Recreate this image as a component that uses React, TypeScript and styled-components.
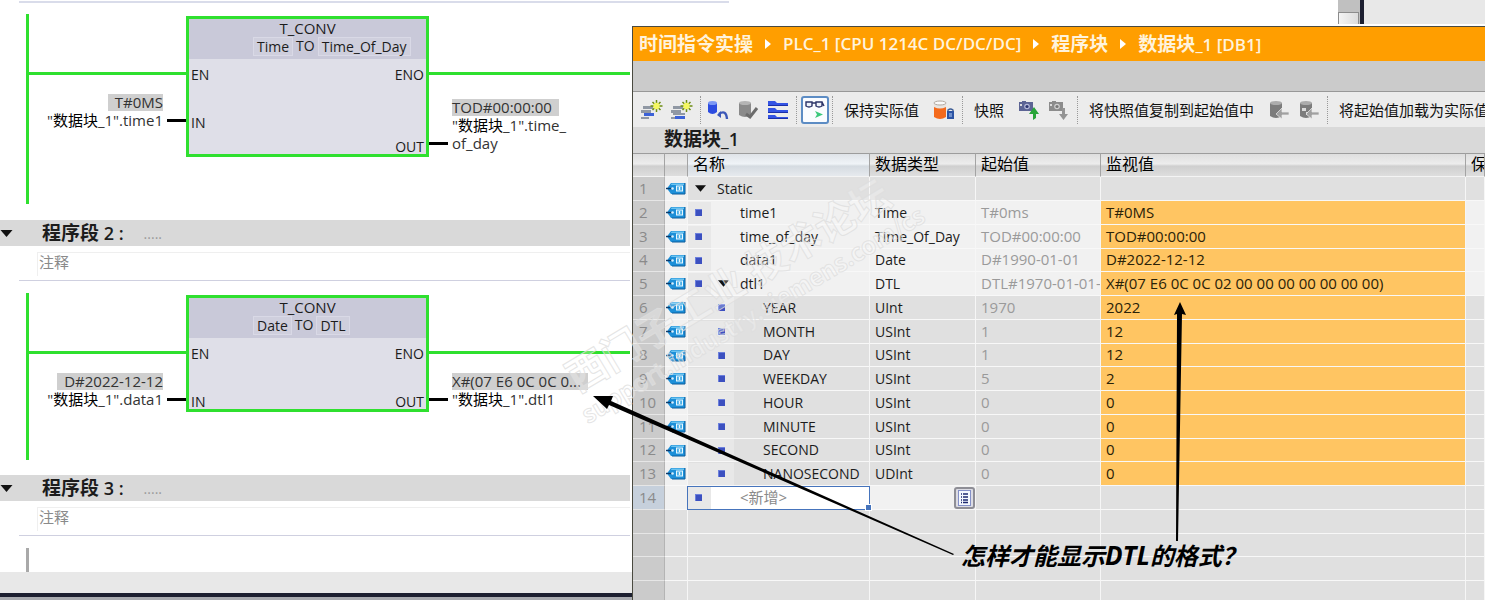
import React from 'react';
import styled, { createGlobalStyle } from 'styled-components';

const GREEN = '#2fe02f';

const GlobalStyle = createGlobalStyle`
  * { box-sizing: border-box; }
  body {
    margin: 0;
    background: #fff;
    color: #1c1c1c;
    font-family: "Open Sans", "Noto Sans CJK SC", sans-serif;
    font-size: 14px;
  }
  button, input { font: inherit; color: inherit; }
  button { border: 0; background: none; padding: 0; cursor: pointer; }
`;

const Screen = styled.main`
  position: relative;
  display: grid;
  grid-template-columns: 632px minmax(0, 1fr);
  grid-template-rows: minmax(0, 1fr);
  height: 100vh;
  overflow: hidden;
`;

/* ---------- ladder editor ---------- */

const Editor = styled.section`
  display: flex;
  flex-direction: column;
  min-width: 0;
  background: #fff;
`;

const Rule = styled.div`
  flex: none;
  height: 2px;
  margin: 1px 0 0 19px;
  background: #d9dcea;
`;

const ThinRule = styled.div`
  flex: none;
  height: 1px;
  margin: 4px 2px 1px 19px;
  background: #cfd0e0;
`;

const Rung = styled.div<{ $height: number; $after: number }>`
  display: flex;
  flex: none;
  align-items: flex-start;
  height: ${(p) => p.$height}px;
  margin: 11px 2px ${(p) => p.$after}px 26px;
`;

const Rail = styled.div<{ $idle?: boolean }>`
  flex: none;
  width: 3px;
  height: 100%;
  background: ${(p) => (p.$idle ? '#a9a9a9' : GREEN)};
`;

const Side = styled.div<{ $grow?: boolean }>`
  display: flex;
  flex-direction: column;
  flex: ${(p) => (p.$grow ? '1 1 0' : '0 0 157px')};
  min-width: 0;
`;

const Wire = styled.div`
  height: 3px;
  margin-top: 58px;
  background: ${GREEN};
`;

const Operand = styled.div<{ $top: number; $output?: boolean }>`
  display: flex;
  flex-direction: ${(p) => (p.$output ? 'row-reverse' : 'row')};
  justify-content: flex-end;
  align-items: flex-end;
  gap: 4px;
  margin-top: ${(p) => p.$top}px;
`;

const OperandText = styled.div<{ $output?: boolean }>`
  display: flex;
  flex-direction: column;
  align-items: ${(p) => (p.$output ? 'flex-start' : 'flex-end')};
  font-size: 15px;
  line-height: 18px;
  white-space: nowrap;
  color: #333;
`;

const LiveValue = styled.span`
  padding: 0 0 0 7px;
  background: #cfcfcf;
  line-height: 17px;
`;

const OutValue = styled(LiveValue)`
  padding: 0 7px 0 0;
`;

const Cjk = styled.span`
  color: #000;
`;

const Pin = styled.div`
  flex: none;
  width: 19px;
  height: 3px;
  margin-bottom: 7px;
  background: #000;
`;

const Block = styled.div<{ $height: number }>`
  flex: 0 0 243px;
  height: ${(p) => p.$height}px;
  margin-top: 2px;
  border: 3px solid ${GREEN};
  background: #dfdfe8;
  overflow: hidden;
`;

const BlockHead = styled.div`
  height: 40px;
  background: #c9c9d9;
  font-size: 15px;
  text-align: center;
  line-height: 18px;
`;

const Conversion = styled.div`
  display: flex;
  gap: 3px;
  padding-left: 64px;
  font-size: 14px;
`;

const TypePick = styled.button`
  height: 19px;
  padding: 0 3px;
  border: 1px solid #d9d9e6;
  background: #cfcfdd;
  line-height: 16px;
`;

const Ports = styled.div`
  display: grid;
  grid-auto-rows: 24px;
  padding-top: 4px;
`;

const PortRow = styled.div`
  display: flex;
  justify-content: space-between;
  padding: 0 2px;
  line-height: 24px;
`;

const NetHead = styled.header`
  display: flex;
  flex: none;
  align-items: center;
  height: 26px;
  margin-right: 2px;
  background: #d9d9d9;
`;

const Fold = styled.button`
  display: flex;
  width: 42px;
`;

const NetTitle = styled.h2`
  margin: 0;
  font-size: 18px;
  font-weight: 600;
  line-height: 24px;
  white-space: pre;
`;

const BigCjk = styled.span`
  font-size: 19px;
  font-weight: 700;
`;

const Dots = styled.span`
  margin-left: 20px;
  color: #9a9a9a;
`;

const Comment = styled.input`
  flex: none;
  height: 24px;
  margin: 6px 2px 0 37px;
  padding: 0 0 6px 1px;
  border: 1px solid #efefef;
  border-width: 1px 0 0 1px;
  border-radius: 0;
  background: #fff;
  color: #8a8a8a;
  font-size: 15px;
  outline: 0;
`;

const EditorFoot = styled.div`
  flex: 1 0 auto;
  background: #e8e8e8;
`;

const PaneEdge = styled.div`
  flex: none;
  height: 7px;
  border-top: 4px solid #1c1f30;
  background: #a9abb0;
`;

/* ---------- data block window ---------- */

const RightSide = styled.div`
  display: flex;
  flex-direction: column;
  min-width: 0;
  min-height: 0;
`;

const Behind = styled.div`
  display: flex;
  flex: none;
  height: 24px;
  margin-bottom: 2px;
`;

const BehindPage = styled.div`
  flex: 1;
`;

const BehindRule = styled.div`
  width: 97px;
  height: 2px;
  margin-top: 1px;
  background: #d9dcea;
`;

const ScrollTrack = styled.div`
  display: flex;
  align-items: flex-end;
  width: 22px;
  background: #c0c0c0;
`;

const ScrollThumb = styled.div`
  width: 21px;
  height: 12px;
  border: 1px solid #8c8c8c;
  border-bottom: 0;
  background: linear-gradient(90deg, #f4f4f4, #dcdcdc);
`;

const BehindPanel = styled.div`
  width: 125px;
  border-left: 4px solid #1c1f30;
  background: #e8e8e8;
`;

const DbWindow = styled.section`
  display: flex;
  flex: 1;
  flex-direction: column;
  min-height: 0;
  border: solid #4a4a40;
  border-width: 1px 0 0 1px;
  background: #e0e0e0;
  overflow: hidden;
`;

const Crumbs = styled.nav`
  display: flex;
  flex: none;
  align-items: center;
  height: 34px;
  padding-left: 6px;
  background: #ff9e00;
  color: #fff3dc;
  font-size: 17px;
  font-weight: 600;
  white-space: nowrap;
`;

const Crumb = styled.a`
  color: inherit;
  text-decoration: none;
  line-height: 30px;
`;

const CrumbArrow = styled.svg`
  flex: none;
  width: 6px;
  height: 10px;
  margin: 0 12px;
`;

const Spacer = styled.div`
  flex: none;
  height: 31px;
  border-bottom: 1px solid #989898;
  background: #cbcbcb;
`;

const Toolbar = styled.div`
  display: flex;
  flex: none;
  align-items: center;
  height: 35px;
  padding-left: 4px;
  background: #ececec;
  overflow: hidden;
`;

const ToolButton = styled.button`
  display: flex;
  flex: none;
  align-items: center;
  justify-content: center;
  width: 30px;
  height: 28px;
`;

const ToolToggle = styled(ToolButton)`
  width: 28px;
  margin-left: 2px;
  border: 2px solid #5c8cc4;
  border-radius: 3px;
  background: #fafcff;
`;

const TextButton = styled.button`
  flex: none;
  padding: 0 10px 0 9px;
  font-size: 15px;
  white-space: nowrap;
  color: #111;
`;

const Separator = styled.div`
  flex: none;
  width: 1px;
  height: 28px;
  margin: 0 2px 0 3px;
  border-left: 1px dotted #999;
`;

const DbTitle = styled.h1`
  flex: none;
  height: 26px;
  margin: 0;
  padding-left: 31px;
  background: #d9d9d9;
  font-size: 18px;
  font-weight: 600;
  line-height: 24px;
`;

const Grid = styled.table`
  width: 100%;
  table-layout: fixed;
  border-collapse: separate;
  border-spacing: 0;

  th {
    height: 24px;
    padding: 0 0 2px 5px;
    border-top: 1px solid #9c9c9c;
    border-right: 1px solid #a4a4a4;
    border-bottom: 1px solid #f4f4f4;
    background: linear-gradient(#dedede, #ededed 45%, #cfcfcf 55%, #dedede);
    font-size: 16px;
    font-weight: 400;
    line-height: 20px;
    text-align: left;
    white-space: nowrap;
    overflow: hidden;
    color: #000;
  }
  th.name { background: linear-gradient(#dfe3e8, #f0f4f8 45%, #d5dbe1 55%, #e6eaee); }

  tbody tr { height: 24px; }
  tbody tr:nth-child(4n) { height: 23px; }
`;

const Cell = styled.td<{ $bg: string }>`
  height: inherit;
  padding: 0 0 0 5px;
  border-right: 1px solid #f6f6f6;
  border-bottom: 1px solid #f8f8f8;
  background: ${(p) => p.$bg};
  line-height: 20px;
  white-space: nowrap;
  overflow: hidden;
`;

const NumCell = styled(Cell)`
  padding: 0 0 2px 6px;
  border-right-color: #b4b4b4;
  border-bottom-color: #e6e6e6;
  color: #8a8a8a;
  font-size: 15px;
`;

const TagCell = styled(Cell)`
  padding: 0 0 0 1px;
  svg { display: block; }
`;

const ValueCell = styled(Cell)<{ $muted?: boolean }>`
  padding-bottom: 2px;
  color: ${(p) => (p.$muted ? '#9a9a9a' : '#2a2208')};
  font-size: 15px;
`;

const NameCell = styled(Cell)`
  position: relative;
  padding: 0;
  overflow: visible;
`;

const NameLine = styled.div<{ $active?: boolean }>`
  display: flex;
  height: 22px;
  align-items: center;
  ${(p) => p.$active && 'box-shadow: 0 0 0 1px #4674bc;'}
`;

const Slot = styled.span<{ $guide?: boolean }>`
  display: flex;
  flex: none;
  align-self: stretch;
  align-items: center;
  width: 23px;
  padding-left: 7px;
  background: ${(p) => (p.$guide ? '#e8e8e8' : 'transparent')};
`;

const Bullet = styled.i`
  width: 7px;
  height: 7px;
  background: #3c50c0;
  border: solid #6c80dc;
  border-width: 1px 0 0 1px;
`;

const NameText = styled.span`
  padding-left: 6px;
`;

const NewName = styled.input`
  width: 120px;
  height: 20px;
  padding: 0 0 1px 6px;
  border: 0;
  outline: 0;
  background: transparent;
  color: #8a8a8a;
  font-size: 15px;
`;

const Handle = styled.i`
  position: absolute;
  right: -3px;
  bottom: -2px;
  z-index: 1;
  width: 7px;
  height: 7px;
  border: 1px solid #fff;
  background: #4674bc;
`;

const TypeLine = styled.div`
  display: flex;
  justify-content: flex-end;
`;

const ListButton = styled.button`
  display: flex;
  align-items: center;
  justify-content: center;
  width: 21px;
  height: 22px;
  border: 2px solid #8e8e96;
  border-radius: 3px;
  background: #dcdce4;
`;

/* ---------- annotations drawn over the screen ---------- */

const Annotation = styled.svg`
  position: absolute;
  inset: 0;
  width: 1485px;
  height: 600px;
  pointer-events: none;
`;

const Watermark = styled.text`
  fill: rgba(255, 255, 255, 0.25);
  stroke: rgba(222, 222, 222, 0.8);
  stroke-width: 1;
  font-family: "Noto Sans CJK SC", sans-serif;
  font-weight: 700;
`;

const Question = styled.p`
  position: absolute;
  left: 961px;
  top: 540px;
  margin: 0;
  color: #000;
  font-size: 24px;
  font-weight: 700;
  font-style: italic;
  line-height: 30px;
  white-space: nowrap;
`;

const Acronym = styled.span`
  font-size: 26px;
`;

/* ---------- icons ---------- */

const Triangle = ({ w = 12 }: { w?: number }) => (
  <svg width={w} height={7} viewBox="0 0 12 7" aria-hidden>
    <path d="M0 0H12L6 7Z" fill="#111" />
  </svg>
);

const TagIcon = () => (
  <svg width="20" height="13" viewBox="0 0 20 13" aria-hidden>
    <path d="M5 1H19V12H5L1 6.5Z" fill="#1c8fd8" />
    <path d="M5.5 1.5H18V3H5Z" fill="#6cc4f0" />
    <path d="M19 1V12H6" fill="none" stroke="#0c5c9c" />
    <path d="M0 6.5H6" stroke="#0c3c6c" strokeWidth="1.4" />
    <circle cx="6.5" cy="6.5" r="1.3" fill="#d8f0ff" />
    <rect x="10.5" y="4" width="6" height="5" fill="#4cb0e8" stroke="#e8f8ff" />
    <path d="M13.500 5V8" stroke="#e8f8ff" strokeWidth="1.3" />
  </svg>
);

const RowsIcon = ({ low }: { low?: boolean }) => (
  <svg width="22" height="22" viewBox="0 0 22 22" aria-hidden>
    <g fill="#9098a4">
      <rect x="2" y="7" width="10" height="3" />
      <rect x="0" y="11" width="10" height="3" />
      {low && <rect x="2" y="14" width="12" height="2" />}
      <rect x="0" y="18" width="8" height="2" />
    </g>
    <rect x={low ? 4 : 3} y={low ? 17 : 14} width="10" height="3" fill="#3c62d8" />
    <path
      d="M15.500 1V13M9.500 7H21.500M11.500 3L19.500 11M19.500 3L11.500 11"
      stroke="#6c8c10"
      strokeWidth="1.5"
    />
    <circle cx="15.500" cy="7" r="3.200" fill="#f4f860" />
  </svg>
);

const Cylinder = ({ x, y, w, h, body, top }: { x: number; y: number; w: number; h: number; body: string; top: string }) => (
  <>
    <path
      d={`M${x} ${y + 2}V${y + h - 2}Q${x + w / 2} ${y + h + 2} ${x + w} ${y + h - 2}V${y + 2}Z`}
      fill={body}
    />
    <ellipse cx={x + w / 2} cy={y + 2} rx={w / 2} ry="2" fill={top} />
  </>
);

const DbUndoIcon = () => (
  <svg width="22" height="22" viewBox="0 0 22 22" aria-hidden>
    <Cylinder x={1} y={2} w={9} h={13} body="#2c4ce0" top="#7c98f4" />
    <path d="M12 15Q19 10 20 20" fill="none" stroke="#3c58b8" strokeWidth="2.4" />
    <path d="M10 16L14 12V19Z" fill="#3c58b8" />
  </svg>
);

const DbCheckIcon = () => (
  <svg width="22" height="22" viewBox="0 0 22 22" aria-hidden>
    <Cylinder x={2} y={2} w={12} h={16} body="#8a8a8a" top="#b4b4b4" />
    <path d="M9 15L13 18L20 9" fill="none" stroke="#6c6c6c" strokeWidth="3" />
  </svg>
);

const FoldersIcon = () => (
  <svg width="22" height="22" viewBox="0 0 22 22" aria-hidden>
    <g fill="#3454e4">
      <path d="M1 2H8L10 4H21V7H1Z" />
      <path d="M1 9H8L10 11H21V14H1Z" />
      <path d="M1 16H8L10 18H21V20H1Z" />
    </g>
    <path d="M1 6.500H21M1 13.500H21M1 19.500H21" stroke="#1c30a8" />
  </svg>
);

const GlassesIcon = () => (
  <svg width="24" height="24" viewBox="0 0 24 24" aria-hidden>
    <path
      d="M3 4H9V8Q6 10 3 8ZM13 4H19V8Q16 10 13 8ZM9 5H13M19 4L21 8"
      fill="#eef2fa"
      stroke="#2c3468"
      strokeWidth="1.4"
    />
    <path d="M12 13L20 16.500L12 20L14 16.500Z" fill="#3cc87c" />
  </svg>
);

const RetainIcon = () => (
  <svg width="22" height="22" viewBox="0 0 22 22" aria-hidden>
    <Cylinder x={1} y={2} w={12} h={18} body="#f46a1c" top="#fff" />
    <path d="M1 4V8Q7 11 13 8V4Q7 7 1 4Z" fill="#e8e4e0" />
    <ellipse cx="7" cy="4" rx="6" ry="2" fill="#fafafa" stroke="#b0a8a0" />
    <path d="M15 13V11Q17.500 9 20 11V13" fill="none" stroke="#3c5c94" strokeWidth="1.4" />
    <rect x="14" y="12" width="7" height="8" fill="#2c54a4" />
    <path d="M16 15H19M16 17H19" stroke="#b4ccf4" />
  </svg>
);

const CameraIcon = ({ off }: { off?: boolean }) => (
  <svg width="22" height="22" viewBox="0 0 22 22" aria-hidden>
    <path d="M1 3H4V2H8V3H15V12H1Z" fill={off ? '#8c8c8c' : '#5c6494'} />
    <circle cx="9" cy="7.500" r="2.800" fill={off ? '#d0d0d0' : '#b4b8d8'} />
    <circle cx="9" cy="7.500" r="1.600" fill={off ? '#777' : '#2c3470'} />
    <rect x="2" y="5" width="2" height="2" fill="#ddd" />
    {off ? (
      <path d="M14 9H17V15H20L15.500 21L11 15H14Z" fill="#949494" />
    ) : (
      <path d="M15 21V15H11L16 8L21 15H18V19Z" fill="#28a438" />
    )}
  </svg>
);

const DbArrowIcon = ({ dotted }: { dotted?: boolean }) => (
  <svg width="22" height="22" viewBox="0 0 22 22" aria-hidden>
    <Cylinder x={2} y={2} w={12} h={17} body="#7c7c7c" top="#acacac" />
    {dotted && <path d="M4 9H8V12H4ZM8 13H11V16H8Z" fill="#dcdcdc" />}
    <path d="M8 15L14 9V13H21V16H14V20Z" fill="#a0a0a0" stroke="#ececec" strokeWidth=".7" />
  </svg>
);

const ListIcon = () => (
  <svg width="15" height="16" viewBox="0 0 15 16" aria-hidden>
    <rect x="1.500" y=".500" width="12" height="15" fill="#f4f8ff" stroke="#8490c8" />
    <path d="M4 4H5M4 7H5M4 10H5M4 12.500H5M6 4H11M6 7H11M6 10H11M6 12.500H11" stroke="#1c2870" strokeWidth="1.5" />
  </svg>
);

/* ---------- ladder parts ---------- */

type NetworkProps = {
  height: number;
  after: number;
  blockHeight: number;
  from: string;
  to: string;
  ports: [string, string][];
  input: { value: string; member: string };
  output: { value: string; member: string; rest?: string; top: number };
};

const Network = ({ height, after, blockHeight, from, to, ports, input, output }: NetworkProps) => (
  <Rung $height={height} $after={after}>
    <Rail />
    <Side>
      <Wire />
      <Operand $top={19}>
        <OperandText>
          <LiveValue>{input.value}</LiveValue>
          <span>"<Cjk>数据块</Cjk>_1".{input.member}</span>
        </OperandText>
        <Pin />
      </Operand>
    </Side>
    <Block $height={blockHeight}>
      <BlockHead>
        T_CONV
        <Conversion>
          <TypePick>{from}</TypePick>
          <span>TO</span>
          <TypePick>{to}</TypePick>
        </Conversion>
      </BlockHead>
      <Ports>
        {ports.map(([left, right], i) => (
          <PortRow key={i}>
            <span>{left}</span>
            <span>{right}</span>
          </PortRow>
        ))}
      </Ports>
    </Block>
    <Side $grow>
      <Wire />
      <Operand $top={output.top} $output>
        <OperandText $output>
          <OutValue>{output.value}</OutValue>
          <span>"<Cjk>数据块</Cjk>_1".{output.member}</span>
          {output.rest && <span>{output.rest}</span>}
        </OperandText>
        <Pin />
      </Operand>
    </Side>
  </Rung>
);

const NetworkHeader = ({ n }: { n: number }) => (
  <>
    <NetHead>
      <Fold aria-label="折叠"><Triangle w={13} /></Fold>
      <NetTitle><BigCjk>程序段</BigCjk> {n} :</NetTitle>
      <Dots>.....</Dots>
    </NetHead>
    <Comment aria-label={`程序段 ${n} 注释`} defaultValue="注释" />
    <ThinRule />
  </>
);

/* ---------- table data ---------- */

type Row = { name: string; type: string; start: string; live: string; depth: number; open?: boolean };

const rows: Row[] = [
  { name: 'Static', type: '', start: '', live: '', depth: 0, open: true },
  { name: 'time1', type: 'Time', start: 'T#0ms', live: 'T#0MS', depth: 1 },
  { name: 'time_of_day', type: 'Time_Of_Day', start: 'TOD#00:00:00', live: 'TOD#00:00:00', depth: 1 },
  { name: 'data1', type: 'Date', start: 'D#1990-01-01', live: 'D#2022-12-12', depth: 1 },
  { name: 'dtl1', type: 'DTL', start: 'DTL#1970-01-01-0', live: 'X#(07 E6 0C 0C 02 00 00 00 00 00 00 00)', depth: 1, open: true },
  { name: 'YEAR', type: 'UInt', start: '1970', live: '2022', depth: 2 },
  { name: 'MONTH', type: 'USInt', start: '1', live: '12', depth: 2 },
  { name: 'DAY', type: 'USInt', start: '1', live: '12', depth: 2 },
  { name: 'WEEKDAY', type: 'USInt', start: '5', live: '2', depth: 2 },
  { name: 'HOUR', type: 'USInt', start: '0', live: '0', depth: 2 },
  { name: 'MINUTE', type: 'USInt', start: '0', live: '0', depth: 2 },
  { name: 'SECOND', type: 'USInt', start: '0', live: '0', depth: 2 },
  { name: 'NANOSECOND', type: 'UDInt', start: '0', live: '0', depth: 2 },
];

const GRAY = '#e0e0e0';
const LIGHT = '#f1f1f1';

const DataRow = ({ row, n }: { row: Row; n: number }) => {
  const bg = row.depth === 1 ? LIGHT : GRAY;
  return (
    <tr>
      <NumCell $bg="#cbcbcb">{n}</NumCell>
      <TagCell $bg={LIGHT}><TagIcon /></TagCell>
      <NameCell $bg={bg}>
        <NameLine>
          {row.depth === 2 && <Slot $guide />}
          {row.depth > 0 && <Slot $guide><Bullet /></Slot>}
          <Slot>{row.open && <Triangle w={11} />}</Slot>
          <NameText>{row.name}</NameText>
        </NameLine>
      </NameCell>
      <Cell $bg={bg}>{row.type}</Cell>
      <ValueCell $bg={bg} $muted>{row.start}</ValueCell>
      <ValueCell $bg={row.live ? '#ffc562' : GRAY}>{row.live}</ValueCell>
      <Cell $bg={bg} />
    </tr>
  );
};

const DataBlock = () => (
  <Grid>
    <colgroup>
      <col style={{ width: 32 }} />
      <col style={{ width: 23 }} />
      <col style={{ width: 182 }} />
      <col style={{ width: 106 }} />
      <col style={{ width: 125 }} />
      <col />
      <col style={{ width: 19 }} />
    </colgroup>
    <thead>
      <tr>
        <th />
        <th />
        <th className="name">名称</th>
        <th>数据类型</th>
        <th>起始值</th>
        <th>监视值</th>
        <th>保持</th>
      </tr>
    </thead>
    <tbody>
      {rows.map((row, i) => <DataRow key={row.name} row={row} n={i + 1} />)}
      <tr>
        <NumCell $bg="#c6d0dc">14</NumCell>
        <TagCell $bg={LIGHT} />
        <NameCell $bg="#fff">
          <NameLine $active>
            <Slot $guide><Bullet /></Slot>
            <Slot />
            <NewName aria-label="新增变量" defaultValue="<新增>" />
          </NameLine>
          <Handle />
        </NameCell>
        <Cell $bg={LIGHT}>
          <TypeLine>
            <ListButton aria-label="选择数据类型"><ListIcon /></ListButton>
          </TypeLine>
        </Cell>
        <Cell $bg={GRAY} />
        <Cell $bg={GRAY} />
        <Cell $bg={GRAY} />
      </tr>
      {[15, 16, 17, 18].map((n) => (
        <tr key={n}>
          <NumCell $bg="#cbcbcb" />
          <Cell $bg={GRAY} />
          <Cell $bg={GRAY} />
          <Cell $bg={GRAY} />
          <Cell $bg={GRAY} />
          <Cell $bg={GRAY} />
          <Cell $bg={GRAY} />
        </tr>
      ))}
    </tbody>
  </Grid>
);

const Next = () => (
  <CrumbArrow viewBox="0 0 6 10" aria-hidden>
    <path d="M0 0L6 5L0 10Z" fill="#fff" />
  </CrumbArrow>
);

export default function App() {
  return (
    <Screen>
      <GlobalStyle />
      <Editor>
        <Rule />
        <Network
          height={190}
          after={16}
          blockHeight={141}
          from="Time"
          to="Time_Of_Day"
          ports={[['EN', 'ENO'], ['', ''], ['IN', ''], ['', 'OUT']]}
          input={{ value: 'T#0MS', member: 'time1' }}
          output={{ value: 'TOD#00:00:00', member: 'time_', rest: 'of_day', top: 24 }}
        />
        <NetworkHeader n={2} />
        <Network
          height={167}
          after={15}
          blockHeight={117}
          from="Date"
          to="DTL"
          ports={[['EN', 'ENO'], ['', ''], ['IN', 'OUT']]}
          input={{ value: 'D#2022-12-12', member: 'data1' }}
          output={{ value: 'X#(07 E6 0C 0C 0...', member: 'dtl1', top: 19 }}
        />
        <NetworkHeader n={3} />
        <Rung $height={24} $after={0}>
          <Rail $idle />
        </Rung>
        <EditorFoot />
        <PaneEdge />
      </Editor>

      <RightSide>
        <Behind>
          <BehindPage><BehindRule /></BehindPage>
          <ScrollTrack><ScrollThumb /></ScrollTrack>
          <BehindPanel />
        </Behind>
        <DbWindow>
          <Crumbs>
            <Crumb href="#project"><BigCjk>时间指令实操</BigCjk></Crumb>
            <Next />
            <Crumb href="#plc">PLC_1 [CPU 1214C DC/DC/DC]</Crumb>
            <Next />
            <Crumb href="#blocks"><BigCjk>程序块</BigCjk></Crumb>
            <Next />
            <Crumb href="#db1"><BigCjk>数据块</BigCjk>_1 [DB1]</Crumb>
          </Crumbs>
          <Spacer />
          <Toolbar>
            <ToolButton aria-label="插入行"><RowsIcon /></ToolButton>
            <ToolButton aria-label="添加行"><RowsIcon low /></ToolButton>
            <Separator />
            <ToolButton aria-label="复位起始值"><DbUndoIcon /></ToolButton>
            <ToolButton aria-label="更新接口"><DbCheckIcon /></ToolButton>
            <ToolButton aria-label="扩展模式"><FoldersIcon /></ToolButton>
            <Separator />
            <ToolToggle aria-label="全部监视" aria-pressed="true"><GlassesIcon /></ToolToggle>
            <Separator />
            <TextButton>保持实际值</TextButton>
            <ToolButton aria-label="保持"><RetainIcon /></ToolButton>
            <Separator />
            <TextButton>快照</TextButton>
            <ToolButton aria-label="上传快照"><CameraIcon /></ToolButton>
            <ToolButton aria-label="下载快照"><CameraIcon off /></ToolButton>
            <Separator />
            <TextButton>将快照值复制到起始值中</TextButton>
            <ToolButton aria-label="复制全部值"><DbArrowIcon /></ToolButton>
            <ToolButton aria-label="复制设定值"><DbArrowIcon dotted /></ToolButton>
            <Separator />
            <TextButton>将起始值加载为实际值</TextButton>
          </Toolbar>
          <DbTitle><BigCjk>数据块</BigCjk>_1</DbTitle>
          <DataBlock />
        </DbWindow>
      </RightSide>

      <Annotation viewBox="0 0 1485 600" aria-hidden>
        <g transform="rotate(-31 587 370)">
          <Watermark x="567" y="385" fontSize="40" xmlSpace="preserve">西门子工业 技术论坛</Watermark>
          <Watermark x="560" y="417" fontSize="24">support.industry.siemens.com/cs</Watermark>
        </g>
        <path d="M593 396L613 396L611 401L954 554L953 555L609 405L607 409Z" fill="#000" />
        <path d="M1180 302L1186 315L1182 314L1178 541H1176L1177 314L1174 315Z" fill="#000" />
      </Annotation>
      <Question>怎样才能显示<Acronym>DTL</Acronym>的格式？</Question>
    </Screen>
  );
}
